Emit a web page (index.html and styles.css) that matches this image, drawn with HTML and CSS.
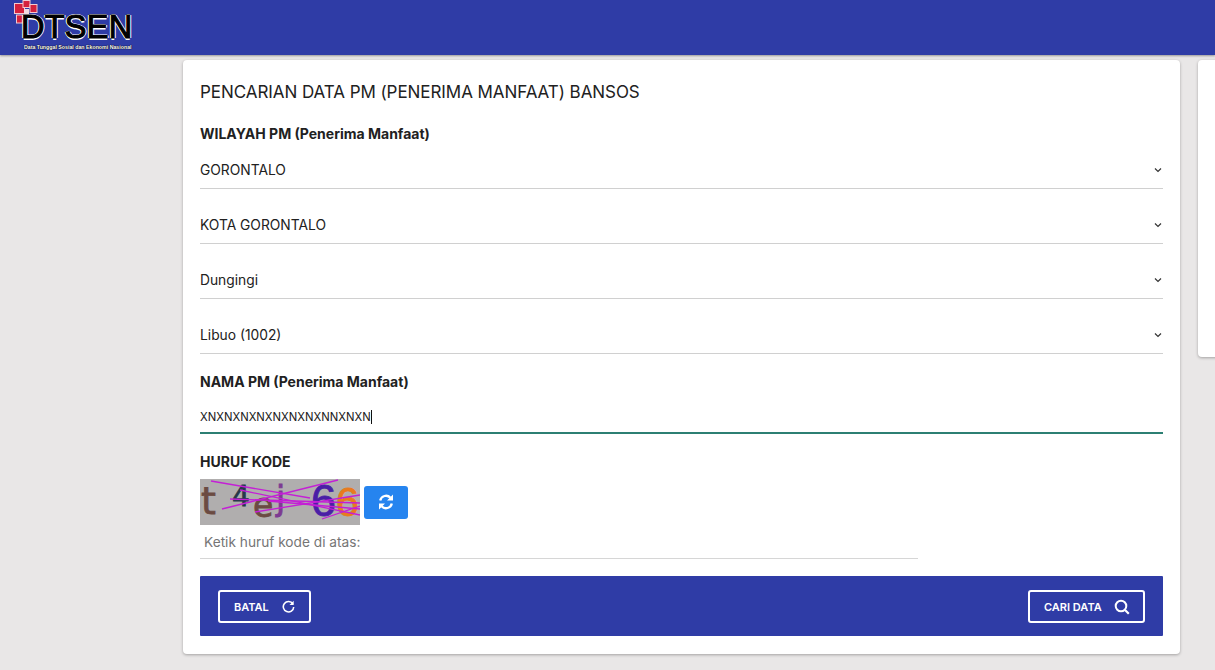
FILE: index.html
```html
<!DOCTYPE html>
<html lang="id">
<head>
<meta charset="utf-8">
<title>Cek Bansos</title>
<link rel="stylesheet" href="styles.css">
</head>
<body>
<header class="topbar">
  <div class="logo">
    <svg class="logo-mark" width="24" height="24" viewBox="0 0 24 24">
      <rect x="0.5" y="3.5" width="10" height="10" fill="#d4213d" stroke="#f3c9d0" stroke-width="1"/>
      <rect x="9" y="0.5" width="7" height="7" fill="#d4213d" stroke="#f3c9d0" stroke-width="1"/>
      <rect x="10" y="9" width="5" height="5" fill="#f3dbe0"/>
      <rect x="16" y="4.500" width="7" height="8" fill="#d4213d" stroke="#f3c9d0" stroke-width="1"/>
      <rect x="2.500" y="15" width="7" height="8" fill="#d4213d" stroke="#f3c9d0" stroke-width="1"/>
    </svg>
    <div class="logo-word">DTSEN</div>
    <div class="logo-sub">Data Tunggal Sosial dan Ekonomi Nasional</div>
  </div>
</header>
<main class="stage">
  <section class="card">
    <h1 class="title">PENCARIAN DATA PM (PENERIMA MANFAAT) BANSOS</h1>
    <h2 class="label label-first">WILAYAH PM (Penerima Manfaat)</h2>
    <div class="select"><span>GORONTALO</span><svg class="chev" width="8" height="6" viewBox="0 0 8 6"><path d="M1 1.500 4 4.500 7 1.500" fill="none" stroke="#333" stroke-width="1.200"/></svg></div>
    <div class="select"><span>KOTA GORONTALO</span><svg class="chev" width="8" height="6" viewBox="0 0 8 6"><path d="M1 1.500 4 4.500 7 1.500" fill="none" stroke="#333" stroke-width="1.200"/></svg></div>
    <div class="select"><span>Dungingi</span><svg class="chev" width="8" height="6" viewBox="0 0 8 6"><path d="M1 1.500 4 4.500 7 1.500" fill="none" stroke="#333" stroke-width="1.200"/></svg></div>
    <div class="select"><span>Libuo (1002)</span><svg class="chev" width="8" height="6" viewBox="0 0 8 6"><path d="M1 1.500 4 4.500 7 1.500" fill="none" stroke="#333" stroke-width="1.200"/></svg></div>
    <h2 class="label label-name">NAMA PM (Penerima Manfaat)</h2>
    <div class="name-input"><span>XNXNXNXNXNXNXNXNNXNXN</span><i class="caret"></i></div>
    <h2 class="label label-code">HURUF KODE</h2>
    <div class="captcha-row">
      <svg class="captcha" width="160" height="46" viewBox="0 0 160 46">
        <rect width="160" height="46" fill="#b0aeae"/>
        <text x="1" y="35" class="cap cap-t">t</text>
        <text x="32" y="27" class="cap cap-4">4</text>
        <text x="53" y="38" class="cap cap-e">e</text>
        <text x="76" y="31" class="cap cap-j">j</text>
        <text x="111" y="37" class="cap cap-6a">6</text>
        <text x="136" y="37" class="cap cap-6b">6</text>
        <g fill="none" stroke="#c41fd6" stroke-width="1.300">
          <path d="M11 2 110 19"/>
          <path d="M22 30 138 1"/>
          <path d="M30 20 160 24"/>
          <path d="M40 11 160 36"/>
          <path d="M55 33 160 16"/>
          <path d="M68 22 160 30"/>
          <path d="M122 40 160 27"/>
        </g>
      </svg>
      <button class="refresh" type="button" aria-label="Muat ulang">
        <svg width="16" height="16" viewBox="0 0 16 16"><g fill="none" stroke="#fff" stroke-width="2.300"><path d="M2.200 6.500A5.900 5.900 0 0 1 12.400 3.800"/><path d="M13.800 9.500A5.900 5.900 0 0 1 3.600 12.200"/></g><path d="M15 0.500v6h-6zM1 15.500v-6h6z" fill="#fff"/></svg>
      </button>
    </div>
    <div class="code-input">Ketik huruf kode di atas:</div>
    <div class="actions">
      <button class="action" type="button"><span>BATAL</span>
        <svg width="13" height="13" viewBox="0 0 14 14"><path d="M11.700 4.200A5.600 5.600 0 1 0 12.600 7.500" fill="none" stroke="#fff" stroke-width="1.700"/><path d="M12.600 0.800V5.300H8.100z" fill="#fff"/></svg>
      </button>
      <button class="action action-search" type="button"><span>CARI DATA</span>
        <svg width="16" height="16" viewBox="0 0 16 16"><circle cx="7" cy="7" r="5.300" fill="none" stroke="#fff" stroke-width="2"/><path d="M11 11 14.800 14.800" stroke="#fff" stroke-width="2.200"/></svg>
      </button>
    </div>
  </section>
  <aside class="side-card"></aside>
</main>
</body>
</html>
```
FILE: styles.css
```css
* { box-sizing: border-box; }
html, body { margin: 0; height: 670px; overflow: hidden; }
body {
  background: #e9e7e7;
  font-family: Inter, "Liberation Sans", sans-serif;
  color: #212121;
}
.topbar {
  height: 55px;
  background: #2f3ca6;
  box-shadow: 0 1px 2px rgba(0,0,0,.35);
  padding-left: 14px;
}
.logo { position: relative; width: 124px; height: 55px; }
.logo-mark { position: absolute; left: 0; top: 0; }
.logo-word {
  position: absolute;
  left: 7px;
  top: 11px;
  font: 400 32.500px/32px "Liberation Sans", Arial, sans-serif;
  letter-spacing: .25px;
  color: #000;
  -webkit-text-stroke: 1.100px #000;
  text-shadow: 1.500px 0 #fff, -1.500px 0 #fff, 0 1.500px #fff, 0 -1.500px #fff;
}
.logo-sub {
  position: absolute;
  left: 10px;
  top: 44px;
  font: 700 5.250px/7px "Liberation Sans", Arial, sans-serif;
  white-space: nowrap;
  color: #fff;
  text-shadow: 0 0 1px #000, 0 0 1px #000;
}
.stage {
  display: flex;
  align-items: flex-start;
  gap: 18px;
  padding: 5px 0 0 183px;
}
.card, .side-card {
  background: #fff;
  border-radius: 4px;
  box-shadow: 0 1px 3px rgba(0,0,0,.3);
  flex: none;
}
.card { width: 997px; height: 594px; padding: 20px 17px; }
.side-card { width: 40px; height: 297px; }
.title {
  margin: 0;
  font-size: 17px;
  line-height: 24px;
  font-weight: 400;
  letter-spacing: -.06px;
}
.label { margin: 0; font-size: 14px; line-height: 20px; font-weight: 700; color: #212121; }
.label-first { margin-top: 20px; }
.label-name { margin-top: 18px; }
.label-code { margin-top: 18px; }
.select {
  height: 45px;
  margin-bottom: 10px;
  display: flex;
  align-items: center;
  justify-content: space-between;
  padding-top: 8px;
  border-bottom: 1px solid #d0d0d0;
  font-size: 13.800px;
}
.chev { margin-top: 0; margin-right: 1px; }
.name-input {
  height: 42px;
  display: flex;
  align-items: center;
  padding-top: 10px;
  border-bottom: 2px solid #2c7f73;
  font-size: 11.300px;
  color: #212121;
}
.caret { display: inline-block; width: 1px; height: 14px; background: #111; }
.captcha-row { display: flex; align-items: center; gap: 4px; margin-top: 7px; }
.captcha { display: block; }
.cap { font-family: "DejaVu Sans", sans-serif; stroke-width: .8px; }
.cap-t { font-size: 38px; fill: #6b4b42; stroke: #6b4b42; }
.cap-4 { font-size: 28px; fill: #27384a; stroke: #27384a; }
.cap-e { font-size: 33px; fill: #6b4b42; stroke: #6b4b42; }
.cap-j { font-size: 33px; fill: #7d3a92; stroke: #7d3a92; }
.cap-6a { font-family: "Liberation Sans", sans-serif; font-size: 45px; fill: #4a1fa6; stroke: #4a1fa6; }
.cap-6b { font-family: "Liberation Sans", sans-serif; font-size: 41px; fill: #e87b1e; stroke: #e87b1e; }
.refresh {
  width: 44px;
  height: 33px;
  display: flex;
  align-items: center;
  justify-content: center;
  padding: 0;
  border: 0;
  border-radius: 3px;
  background: #2684ef;
}
.code-input {
  width: 718px;
  height: 34px;
  display: flex;
  align-items: center;
  padding-left: 4px;
  border-bottom: 1px solid #d6d6d6;
  font-size: 13.700px;
  color: #757575;
}
.actions {
  height: 60px;
  margin-top: 17px;
  padding: 0 18px;
  display: flex;
  align-items: center;
  justify-content: space-between;
  background: #2f3ca6;
  border-radius: 1px;
}
.action {
  width: 93px;
  height: 33px;
  display: flex;
  align-items: center;
  justify-content: space-between;
  padding: 1px 14px 0 14px;
  background: transparent;
  border: 2px solid #fff;
  border-radius: 3px;
  color: #fff;
  font: 600 11px/14px Inter, sans-serif;
}
.action-search { width: 117px; padding-right: 13px; }
```
